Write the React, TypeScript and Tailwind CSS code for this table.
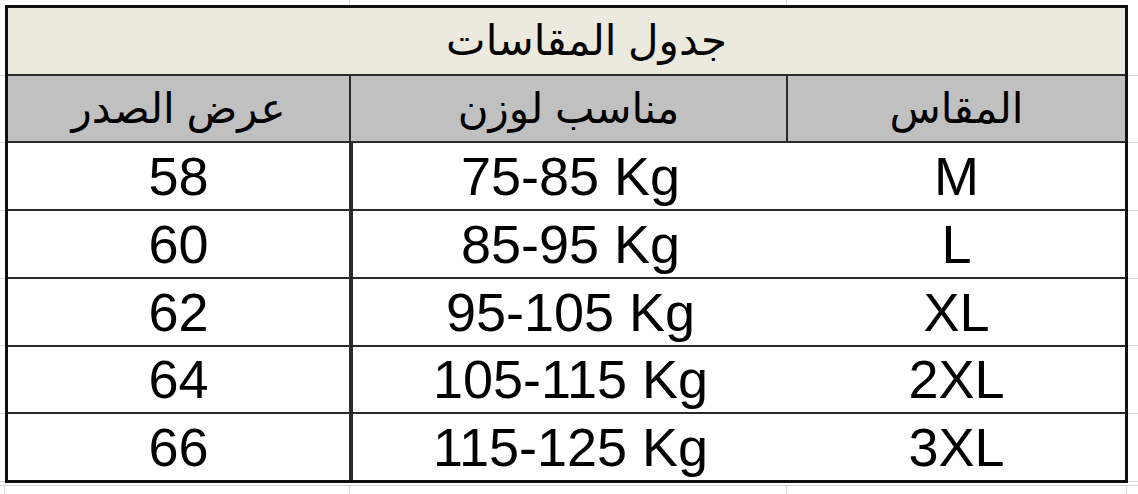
import React from 'react';

const rows = [
  { size: 'M', weight: '75-85 Kg', chest: '58' },
  { size: 'L', weight: '85-95 Kg', chest: '60' },
  { size: 'XL', weight: '95-105 Kg', chest: '62' },
  { size: '2XL', weight: '105-115 Kg', chest: '64' },
  { size: '3XL', weight: '115-125 Kg', chest: '66' },
];

const App = () => {
  return (
    <div
      className="w-[1138px] h-[494px] bg-white flex flex-col overflow-hidden text-black"
      style={{ fontFamily: '"Liberation Sans", "DejaVu Sans", Arial, sans-serif' }}
    >
      {/* sheet grid above the table */}
      <div className="h-[5px] flex shrink-0">
        <div className="w-[350px] border-r border-[#d9d9d9]" />
        <div className="w-[437px] border-r border-[#d9d9d9]" />
      </div>

      <div className="flex shrink-0">
        {/* left gutter with row lines */}
        <div className="w-[5px] flex flex-col pt-[3px]">
          {[0, 1, 2, 3, 4, 5, 6].map((i) => (
            <div key={i} className="h-[67.7px] border-b border-[#d9d9d9]" />
          ))}
        </div>

        {/* the size table */}
        <div dir="rtl" className="w-[1123px] h-[478px] border-[3px] border-[#111] flex flex-col">
          <div className="flex-1 bg-[#eceadf] border-b-2 border-[#2a2a2a] flex items-center justify-center">
            <span className="text-[42px] leading-none pl-[40px]">جدول المقاسات</span>
          </div>

          <div className="flex-1 bg-[#c0c0c0] border-b-2 border-[#2a2a2a] flex">
            <div className="w-[337px] flex items-center justify-center text-[42px] leading-none">المقاس</div>
            <div className="w-[437px] border-r-2 border-[#2a2a2a] flex items-center justify-center text-[42px] leading-none">مناسب لوزن</div>
            <div className="flex-1 border-r-2 border-[#2a2a2a] flex items-center justify-center text-[42px] leading-none">عرض الصدر</div>
          </div>

          {rows.map((r, i) => (
            <div
              key={r.size}
              className={`flex-1 flex ${i < rows.length - 1 ? 'border-b-2 border-[#2a2a2a]' : ''}`}
            >
              <div className="w-[337px] flex items-center justify-center text-[54px] leading-none">{r.size}</div>
              <div dir="ltr" className="w-[437px] border-l-2 border-[#2a2a2a] flex items-center justify-center text-[54px] leading-none">
                {r.weight}
              </div>
              <div className="flex-1 border-r-2 border-[#2a2a2a] flex items-center justify-center text-[54px] leading-none">
                {r.chest}
              </div>
            </div>
          ))}
        </div>

        {/* right gutter */}
        <div className="flex-1 flex flex-col pt-[3px]">
          {[0, 1, 2, 3, 4, 5, 6].map((i) => (
            <div key={i} className="h-[67.7px] border-b border-[#d9d9d9]" />
          ))}
        </div>
      </div>

      {/* sheet grid below the table */}
      <div className="flex-1 mt-[2px] border-t border-[#d9d9d9] flex">
        <div className="w-[5px] border-r border-[#d9d9d9]" />
        <div className="w-[345px] border-r border-[#d9d9d9]" />
        <div className="w-[437px] border-r border-[#d9d9d9]" />
        <div className="w-[340px] border-r border-[#d9d9d9]" />
      </div>
    </div>
  );
};

export default App;
